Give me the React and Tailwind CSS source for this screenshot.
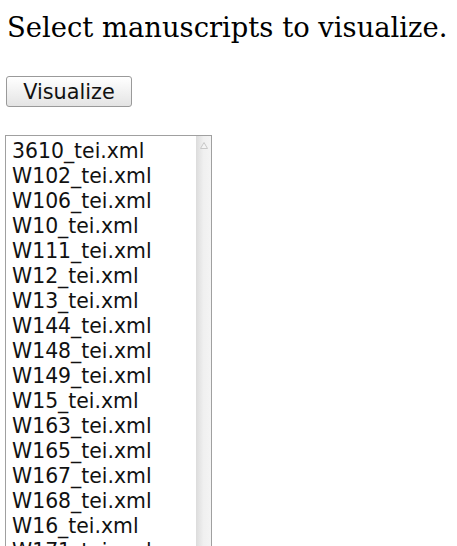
const files = [
  '3610_tei.xml',
  'W102_tei.xml',
  'W106_tei.xml',
  'W10_tei.xml',
  'W111_tei.xml',
  'W12_tei.xml',
  'W13_tei.xml',
  'W144_tei.xml',
  'W148_tei.xml',
  'W149_tei.xml',
  'W15_tei.xml',
  'W163_tei.xml',
  'W165_tei.xml',
  'W167_tei.xml',
  'W168_tei.xml',
  'W16_tei.xml',
  'W171_tei.xml',
  'W172_tei.xml',
  'W17_tei.xml',
];

export default function App() {
  return (
    <div className="h-[546px] w-[457px] overflow-hidden bg-white text-black">
      <h1 className="pl-[7px] pt-[12px] text-[27.4px] leading-[31px] font-normal font-['DejaVu_Serif',serif]">
        Select manuscripts to visualize.
      </h1>

      <div className="pl-[6px] pt-[33px]">
        <button className="h-[31px] w-[126px] rounded-[3px] border border-[#9a9a9a] bg-gradient-to-b from-white to-[#e4e4e4] pt-[2px] text-[20.8px] leading-none text-[#111] font-['DejaVu_Sans',sans-serif]">
          Visualize
        </button>
      </div>

      <div className="pl-[5px] pt-[28px]">
        <div className="flex h-[480px] w-[207px] border border-[#a0a0a0] bg-white">
          <ul className="flex-1 pt-[3px] pl-[6px] font-['DejaVu_Sans',sans-serif] text-[20.4px] text-[#111]">
            {files.map((f) => (
              <li key={f} className="h-[25px] leading-[25px] whitespace-nowrap">
                {f}
              </li>
            ))}
          </ul>
          <div className="relative w-[15px] bg-gradient-to-r from-[#dcdcdc] via-[#f0f0f0] to-[#f4f4f4]">
            <svg className="absolute left-[4px] top-[6px]" width="8" height="7" viewBox="0 0 8 7">
              <path d="M4 0.5 L7.5 6.5 L0.5 6.5 Z" fill="#f4f4f4" stroke="#c8c8c8" strokeWidth="1" />
            </svg>
          </div>
        </div>
      </div>
    </div>
  );
}
